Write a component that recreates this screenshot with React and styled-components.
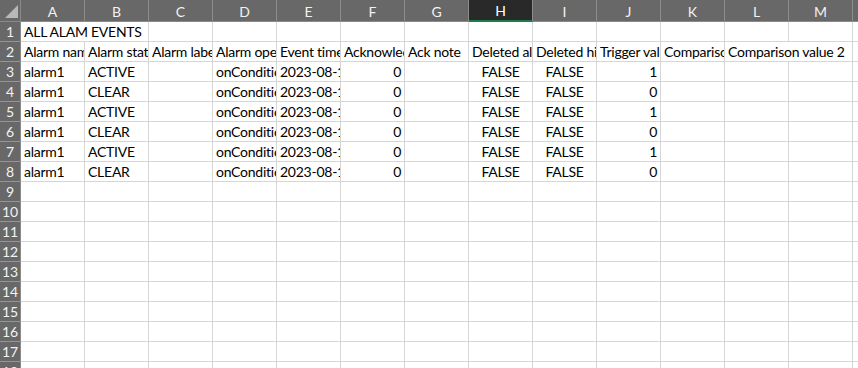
import styled, { createGlobalStyle } from "styled-components";

const GlobalStyle = createGlobalStyle`
  html, body {
    margin: 0;
    padding: 0;
    background: #ffffff;
  }
  body {
    font-family: Lato, "Liberation Sans", sans-serif;
    overflow: hidden;
  }
`;

const columns = ["A", "B", "C", "D", "E", "F", "G", "H", "I", "J", "K", "L", "M"];
const selectedCol = "H";

const headers = [
  "Alarm name",
  "Alarm status",
  "Alarm label",
  "Alarm operator",
  "Event time",
  "Acknowledged",
  "Ack note",
  "Deleted alarm",
  "Deleted history",
  "Trigger value",
  "Comparison value 1",
];

const events = [
  { status: "ACTIVE", trigger: 1 },
  { status: "CLEAR", trigger: 0 },
  { status: "ACTIVE", trigger: 1 },
  { status: "CLEAR", trigger: 0 },
  { status: "ACTIVE", trigger: 1 },
  { status: "CLEAR", trigger: 0 },
];

const TOTAL_ROWS = 18;

const App = () => {
  const rows = [];

  // row 1: title, overflows into B
  rows.push([
    <Cell key="a" $span={2}>ALL ALAM EVENTS</Cell>,
    ...columns.slice(2).map((c) => <Cell key={c} />),
  ]);

  // row 2: header labels, last one overflows into M
  rows.push([
    ...headers.map((h) => <Cell key={h}>{h}</Cell>),
    <Cell key="l" $span={2}>Comparison value 2</Cell>,
  ]);

  events.forEach((ev, i) => {
    rows.push([
      <Cell key="a">alarm1</Cell>,
      <Cell key="b">{ev.status}</Cell>,
      <Cell key="c" />,
      <Cell key="d">onCondition</Cell>,
      <Cell key="e">2023-08-15 10:2{i}</Cell>,
      <Cell key="f" $align="right">0</Cell>,
      <Cell key="g" />,
      <Cell key="h" $align="center">FALSE</Cell>,
      <Cell key="i" $align="center">FALSE</Cell>,
      <Cell key="j" $align="right">{ev.trigger}</Cell>,
      <Cell key="k" />,
      <Cell key="l" />,
      <Cell key="m" />,
    ]);
  });

  while (rows.length < TOTAL_ROWS) {
    rows.push(columns.map((c) => <Cell key={c} />));
  }

  return (
    <>
      <GlobalStyle />
      <Sheet>
        <Corner>
          <CornerTriangle viewBox="0 0 14 14">
            <polygon points="14,0 14,14 0,14" fill="#b8b8b8" />
          </CornerTriangle>
        </Corner>
        {columns.map((c) => (
          <ColHeader key={c} $selected={c === selectedCol}>
            {c}
          </ColHeader>
        ))}
        <ColHeader />
        {rows.map((cells, r) => (
          <Row key={r}>
            <RowHeader>{r + 1}</RowHeader>
            {cells}
            <Cell />
          </Row>
        ))}
      </Sheet>
    </>
  );
};

export default App;

const Sheet = styled.div`
  display: grid;
  grid-template-columns: 21px repeat(13, 64px) 1fr;
  grid-auto-rows: 20px;
  grid-template-rows: 22px;
  width: 858px;
  height: 368px;
  overflow: hidden;
`;

const Row = styled.div`
  display: contents;
`;

const Corner = styled.div`
  background: #686868;
  border-right: 1px solid #8a8a8a;
  border-bottom: 1px solid #8a8a8a;
  display: flex;
  align-items: flex-end;
  justify-content: flex-end;
  padding: 0 2px 3px 0;
`;

const CornerTriangle = styled.svg`
  width: 13px;
  height: 13px;
`;

const ColHeader = styled.div`
  background: ${(p) => (p.$selected ? "#292929" : "#686868")};
  color: ${(p) => (p.$selected ? "#ffffff" : "#f2f2f2")};
  border-right: 1px solid #8c8c8c;
  border-bottom: ${(p) => (p.$selected ? "2px solid #1f7a4d" : "1px solid #8a8a8a")};
  font-size: 14px;
  display: flex;
  align-items: center;
  justify-content: center;
  padding-top: 1px;
`;

const RowHeader = styled.div`
  background: #686868;
  color: #f2f2f2;
  border-bottom: 1px solid #959595;
  border-right: 1px solid #8a8a8a;
  font-size: 14px;
  display: flex;
  align-items: center;
  justify-content: center;
`;

const Cell = styled.div`
  grid-column: span ${(p) => p.$span || 1};
  border-right: 1px solid #d6d6d6;
  border-bottom: 1px solid #d6d6d6;
  padding: 0 3px;
  font-size: 14px;
  letter-spacing: -0.25px;
  color: #000000;
  line-height: 19px;
  white-space: nowrap;
  overflow: hidden;
  text-align: ${(p) => p.$align || "left"};
`;
